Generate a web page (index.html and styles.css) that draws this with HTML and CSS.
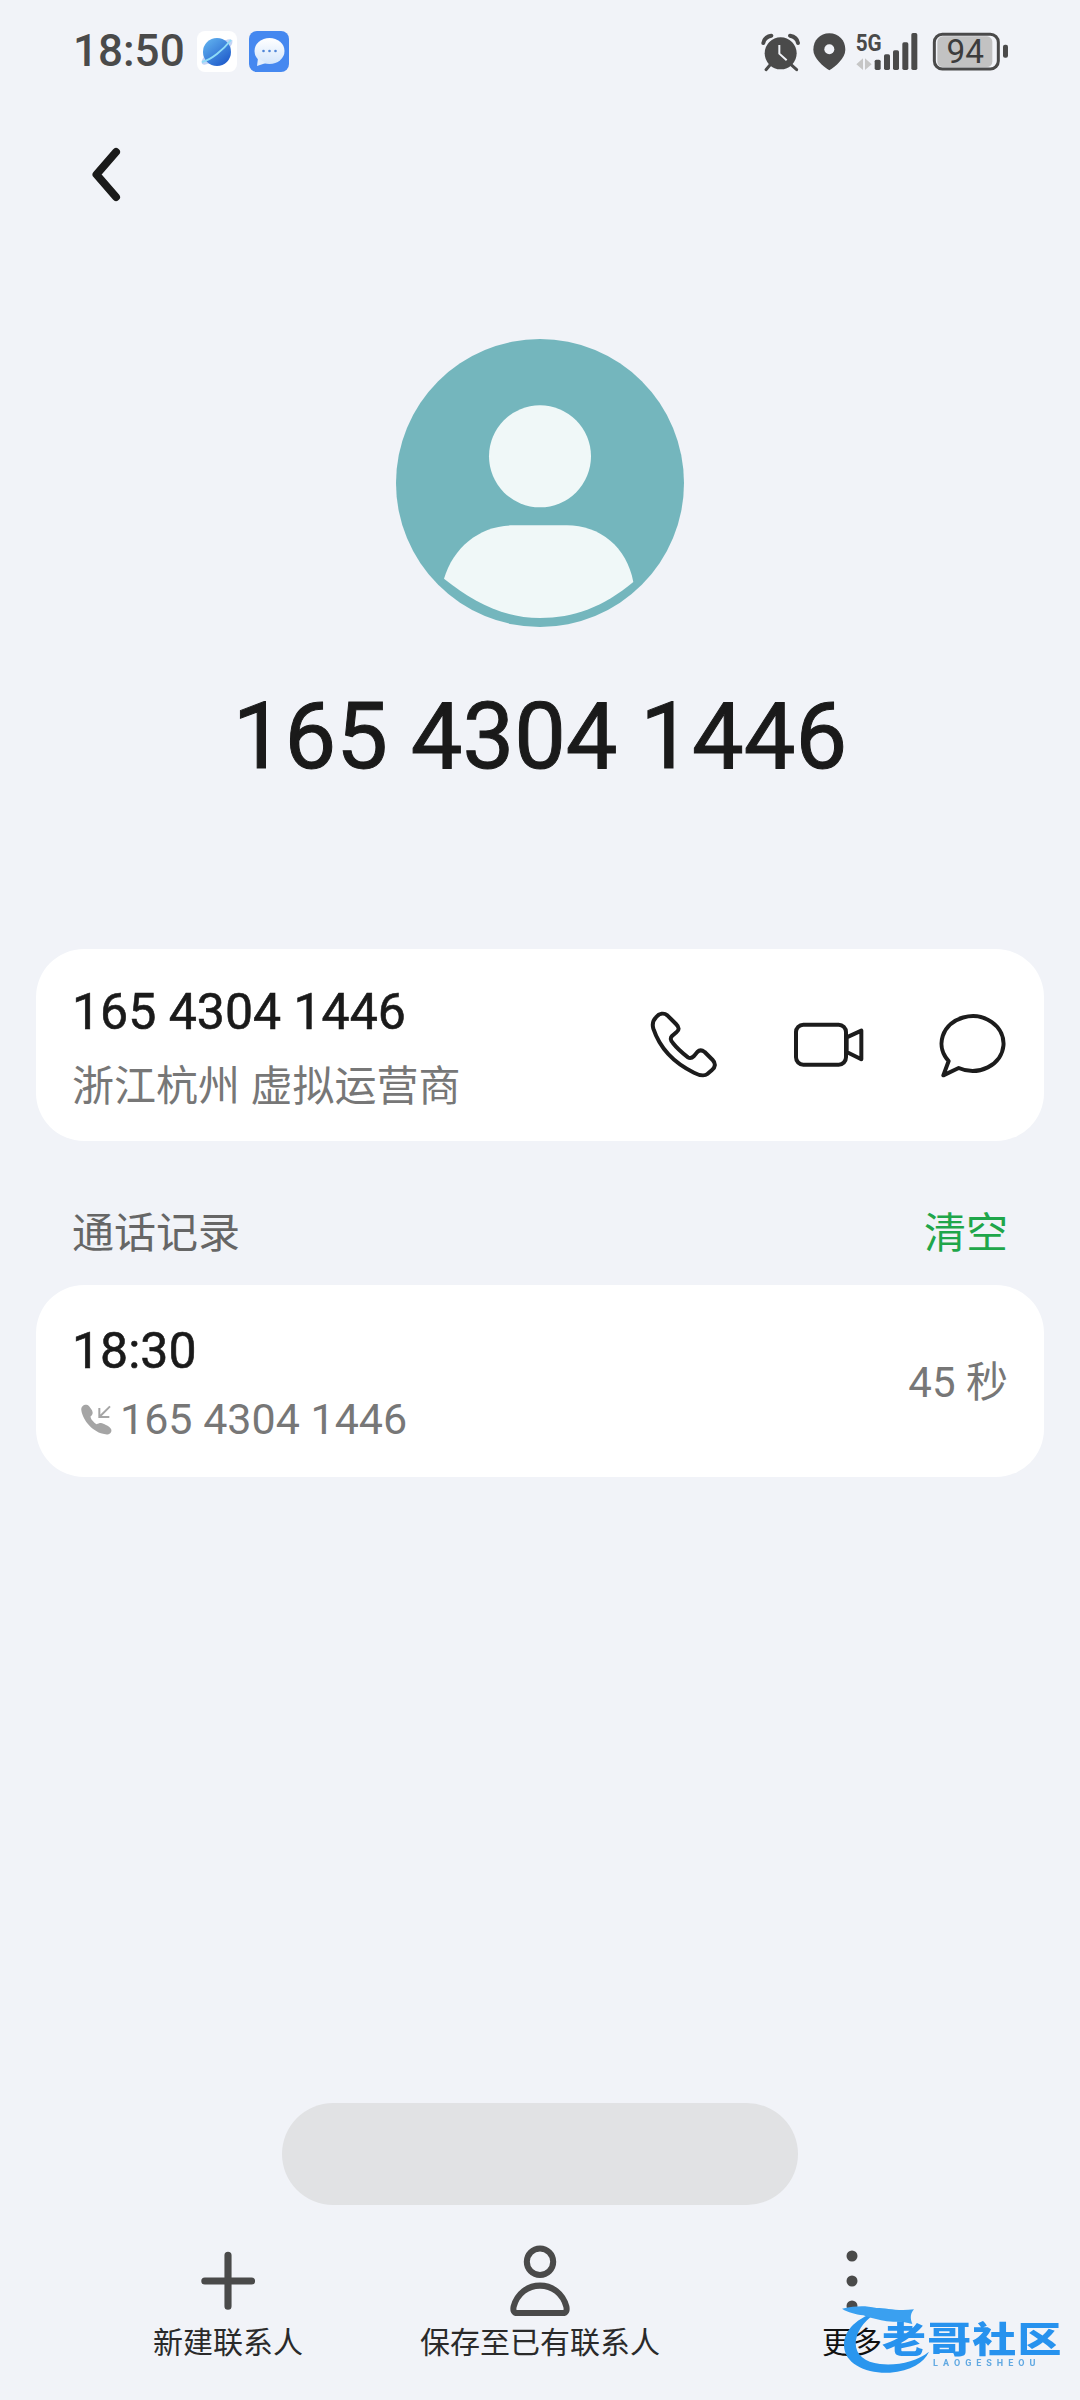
FILE: index.html
```html
<!DOCTYPE html>
<html lang="zh-CN">
<head>
<meta charset="utf-8">
<title>165 4304 1446</title>
<link rel="stylesheet" href="styles.css">
</head>
<body>
<main class="page">
  <header class="status">
    <div class="status-left">
      <span class="clock">18:50</span>
      <svg class="app-icon" viewBox="0 0 40 41">
        <defs>
          <linearGradient id="planet" x1="0.1" y1="0" x2="0.9" y2="1"><stop offset="0" stop-color="#63b4f0"/><stop offset="1" stop-color="#1a55c8"/></linearGradient>
          <linearGradient id="bubble" x1="0" y1="0" x2="0" y2="1"><stop offset="0" stop-color="#ffffff"/><stop offset="1" stop-color="#d4e6fb"/></linearGradient>
        </defs>
        <rect width="40" height="41" rx="8" fill="#fff"/>
        <ellipse cx="20" cy="21" rx="19" ry="6" transform="rotate(-38 20 21)" fill="#c3d4f6"/>
        <circle cx="20" cy="21" r="14" fill="url(#planet)"/>
        <path d="M5 31C14 29 26 19 34 9" fill="none" stroke="#8fdcf7" stroke-width="2"/>
      </svg>
      <svg class="app-icon" viewBox="0 0 40 41">
        <rect width="40" height="41" rx="8" fill="#4588f0"/>
        <ellipse cx="20.500" cy="20" rx="15" ry="13" fill="url(#bubble)"/>
        <path d="M9 27L8 35L17 32Z" fill="#e3effc"/>
        <circle cx="14.500" cy="20" r="1.300" fill="#4f86d8"/>
        <circle cx="20.500" cy="20" r="1.300" fill="#4f86d8"/>
        <circle cx="26.500" cy="20" r="1.300" fill="#4f86d8"/>
      </svg>
    </div>
    <div class="status-right">
      <svg class="st-alarm" viewBox="185 90 120 125">
        <circle cx="244" cy="157" r="48" fill="#4a4a4a"/>
        <path d="M192 126C194 114 204 106 216 104" fill="none" stroke="#4a4a4a" stroke-width="12" stroke-linecap="round"/>
        <path d="M296 126C294 114 284 106 272 104" fill="none" stroke="#4a4a4a" stroke-width="12" stroke-linecap="round"/>
        <path d="M212 192L200 206M276 192L292 206" stroke="#4a4a4a" stroke-width="9" stroke-linecap="round"/>
        <path d="M240 132V158L262 178" fill="none" stroke="#f1f3f8" stroke-width="6"/>
      </svg>
      <svg class="st-pin" viewBox="335 90 110 125">
        <path d="M390 97C362 97 342 118 342 146C342 172 372 196 390 208C408 196 438 172 438 146C438 118 418 97 390 97Z" fill="#4a4a4a"/>
        <circle cx="390" cy="145" r="15" fill="#f1f3f8"/>
      </svg>
      <svg class="st-signal" viewBox="465 60 195 155">
        <text class="fiveg" x="470" y="150" textLength="78" lengthAdjust="spacingAndGlyphs">5G</text>
        <path d="M492 172V207L472 190ZM498 172V207L518 190Z" fill="#c6c6c6"/>
        <rect x="527" y="176" width="18" height="31" rx="5" fill="#4a4a4a"/>
        <rect x="555" y="160" width="18" height="47" rx="5" fill="#4a4a4a"/>
        <rect x="582" y="148" width="18" height="59" rx="5" fill="#4a4a4a"/>
        <rect x="610" y="124" width="18" height="83" rx="5" fill="#4a4a4a"/>
        <rect x="637" y="96" width="18" height="111" rx="5" fill="#4a4a4a"/>
      </svg>
      <svg class="st-battery" viewBox="695 90 235 125">
        <rect x="714" y="106" width="165" height="92" rx="16" fill="#c2c2c2"/>
        <rect x="705" y="100" width="192" height="104" rx="24" fill="none" stroke="#4a4a4a" stroke-width="9"/>
        <rect x="911" y="131" width="15" height="39" rx="6" fill="#4a4a4a"/>
        <text class="batt" x="798" y="187" text-anchor="middle">94</text>
      </svg>
    </div>
  </header>

  <nav class="nav">
    <svg class="back" viewBox="0 0 60 60"><path d="M40 7L20.500 29.500L40 52" fill="none" stroke="#1a1a1a" stroke-width="8" stroke-linecap="round" stroke-linejoin="round"/></svg>
  </nav>

  <svg class="avatar" viewBox="78 56 864 864">
    <circle cx="510" cy="488" r="432" fill="#74b6bd"/>
    <circle cx="510" cy="408" r="153" fill="#f0f8f8"/>
    <path d="M222 775C250 680 330 615 430 615H590C690 615 770 680 790 785C700 860 610 893 510 893C400 893 310 845 222 775Z" fill="#f0f8f8"/>
  </svg>

  <h1 class="title">165 4304 1446</h1>

  <section class="card card-number">
    <div class="lines">
      <div class="primary">165 4304 1446</div>
      <div class="secondary">浙江杭州 虚拟运营商</div>
    </div>
    <div class="actions">
      <svg class="action" viewBox="84 84 216 216"><path d="M108 112C118 100 132 98 142 106L168 132C178 142 178 150 170 156L156 168C150 174 152 182 158 188C172 206 186 218 204 232C210 236 216 234 222 228L232 216C238 210 246 210 254 216L278 240C288 250 286 262 276 270L262 282C252 290 238 286 222 278C160 248 118 200 100 146C96 132 100 120 108 112Z" fill="none" stroke="#1c1c1c" stroke-width="12" stroke-linejoin="round"/></svg>
      <svg class="action" viewBox="516 84 216 216"><rect x="528" y="134" width="150" height="120" rx="22" fill="none" stroke="#1c1c1c" stroke-width="12"/><path d="M680 172L724 152V238L680 216Z" fill="none" stroke="#1c1c1c" stroke-width="12" stroke-linejoin="round"/></svg>
      <svg class="action" viewBox="950 84 216 216"><path d="M1018 264A93 82 0 1 0 988 243L972 286Z" fill="none" stroke="#1c1c1c" stroke-width="12" stroke-linejoin="round"/></svg>
    </div>
  </section>

  <div class="section-head">
    <span class="section-title">通话记录</span>
    <span class="clear">清空</span>
  </div>

  <section class="card card-log">
    <div class="lines">
      <div class="primary">18:30</div>
      <div class="secondary log-sub">
        <svg class="incoming" viewBox="120 300 96 96">
          <path d="M124 322C122 310 132 304 140 305C146 306 150 312 156 322C160 330 158 336 152 340C150 346 160 358 170 364C176 360 184 358 190 362C200 366 212 372 214 380C216 390 206 396 196 394C160 390 128 352 124 322Z" fill="#a5a5a5"/>
          <path d="M210 310L178 342M178 315V342H208" fill="none" stroke="#a5a5a5" stroke-width="6"/>
        </svg>
        <span class="log-number">165 4304 1446</span>
      </div>
    </div>
    <div class="duration">45 秒</div>
  </section>

  <div class="pill"></div>

  <footer class="toolbar">
    <div class="tool">
      <svg class="tool-icon" viewBox="201 79 202 202"><path d="M302 108V251M237 180H368" fill="none" stroke="#4a4a4a" stroke-width="20" stroke-linecap="round"/></svg>
      <span class="tool-label">新建联系人</span>
    </div>
    <div class="tool">
      <svg class="tool-icon" viewBox="1075 79 202 202">
        <circle cx="1176" cy="126" r="37" fill="none" stroke="#4a4a4a" stroke-width="17"/>
        <path d="M1112 270H1240C1250 270 1252 262 1250 252C1240 215 1210 193 1176 193C1142 193 1112 215 1102 252C1100 262 1102 270 1112 270Z" fill="none" stroke="#4a4a4a" stroke-width="17"/>
      </svg>
      <span class="tool-label">保存至已有联系人</span>
    </div>
    <div class="tool">
      <svg class="tool-icon" viewBox="0 0 72 72">
        <circle cx="36" cy="11" r="5.500" fill="#4a4a4a"/>
        <circle cx="36" cy="36" r="5.500" fill="#4a4a4a"/>
        <circle cx="36" cy="61" r="5.500" fill="#4a4a4a"/>
      </svg>
      <span class="tool-label more">更多</span>
    </div>
  </footer>

  <div class="watermark">
    <svg class="wm-dragon" viewBox="180 240 300 225">
      <path d="M300 272C230 292 192 330 192 375C192 432 260 462 330 458C392 453 432 428 447 395C410 425 350 438 300 432C250 426 222 400 228 360C234 325 258 296 300 272Z" fill="#2a96ee"/>
      <path d="M186 266C230 258 250 256 290 264C320 264 350 274 402 268C388 284 392 300 397 312C360 300 350 308 320 304C300 300 270 294 250 286C225 282 205 278 186 266Z" fill="#3aa0f0"/>
    </svg>
    <span class="wm-name">老哥社区</span>
    <span class="wm-sub">LAOGESHEOU</span>
  </div>
</main>
</body>
</html>
```

FILE: styles.css
```css
* { box-sizing: border-box; }
html, body { margin: 0; padding: 0; background: #f1f3f8; }
body { font-family: Roboto, "Noto Sans CJK SC", sans-serif; color: #1a1a1a; }

.page {
  position: relative;
  display: flex;
  flex-direction: column;
  width: 1080px;
  height: 2400px;
  overflow: hidden;
  background: #f1f3f8;
}

/* status bar */
.status {
  display: flex;
  justify-content: space-between;
  align-items: center;
  height: 41px;
  margin-top: 31px;
  padding: 0 71px 0 73px;
}
.status-left { display: flex; align-items: center; }
.clock { font-size: 44px; line-height: 41px; font-weight: 500; color: #4a4a4a; margin-right: 12px; }
.app-icon { width: 40px; height: 41px; margin-right: 12px; }
.status-right { display: flex; align-items: flex-end; height: 41.670px; }
.st-alarm { flex: none; width: 40px; height: 41.670px; margin-right: 10px; }
.st-pin { flex: none; width: 36.670px; height: 41.670px; margin-right: 6.670px; }
.st-signal { flex: none; width: 65px; height: 51.670px; margin-right: 11.670px; }
.st-battery { flex: none; width: 78.330px; height: 41.670px; }
.fiveg { font-family: Roboto, sans-serif; font-size: 72px; font-weight: 700; fill: #4a4a4a; }
.batt { font-family: Roboto, sans-serif; font-size: 100px; fill: #3c3c3c; }

/* nav */
.nav { display: flex; margin-top: 73px; padding-left: 76px; }
.back { width: 60px; height: 60px; }

/* header */
.avatar { align-self: center; width: 288px; height: 288px; margin-top: 134px; }
.title {
  margin: 60px 0 0;
  font-size: 92px;
  line-height: 100px;
  font-weight: 400;
  -webkit-text-stroke: 1px #1a1a1a;
  text-align: center;
  color: #1a1a1a;
}

/* cards */
.card {
  display: flex;
  justify-content: space-between;
  align-items: center;
  height: 192px;
  margin: 0 36px;
  padding: 0 36px;
  background: #fff;
  border-radius: 48px;
}
.card-number { margin-top: 162px; }
.card-number .lines { padding-top: 4px; }
.card-log { margin-top: 26px; }
.card-log .lines { gap: 13px; padding-top: 3px; }
.lines { display: flex; flex-direction: column; gap: 20px; }
.primary { font-size: 50px; line-height: 60px; font-weight: 400; -webkit-text-stroke: 0.6px #1a1a1a; color: #1a1a1a; }
.secondary { font-size: 42px; line-height: 50px; color: #777; }
.log-sub { display: flex; align-items: center; gap: 8px; padding-left: 8px; }
.log-number { font-size: 43px; }
.incoming { width: 32px; height: 32px; }
.actions { display: flex; gap: 72px; padding-bottom: 2px; }
.action { width: 72px; height: 72px; }
.duration { padding-top: 4px; font-size: 42px; line-height: 50px; color: #777; }

.section-head {
  display: flex;
  justify-content: space-between;
  margin-top: 68px;
  padding: 0 72px;
  font-size: 42px;
  line-height: 50px;
}
.section-title { color: #666; }
.clear { color: #1fa64a; }

/* bottom */
.pill {
  flex: none;
  align-self: center;
  width: 516px;
  height: 102px;
  margin-top: auto;
  background: #e1e2e4;
  border-radius: 51px;
}
.toolbar {
  display: grid;
  grid-template-columns: repeat(3, 312px);
  margin-top: 40px;
  padding: 0 72px 37px;
}
.tool { display: flex; flex-direction: column; align-items: center; gap: 6px; }
.tool-icon { width: 72px; height: 72px; }
.tool-label { font-size: 30px; line-height: 40px; color: #2a2a2a; white-space: nowrap; }
.more { color: #111; }

/* watermark over the toolbar */
.watermark { position: absolute; left: 840px; top: 2300px; width: 232px; height: 78px; filter: blur(0.6px); }
.wm-dragon { position: absolute; left: 0; top: 0; width: 100px; height: 75px; }
.wm-name {
  position: absolute;
  left: 42px;
  top: 11px;
  font-size: 36px;
  line-height: 60px;
  font-weight: 900;
  letter-spacing: 1px;
  white-space: nowrap;
  color: #2792ee;
  transform: scaleX(1.22);
  transform-origin: left center;
}
.wm-sub {
  position: absolute;
  left: 93px;
  top: 58px;
  font-size: 9px;
  line-height: 10px;
  font-weight: 700;
  letter-spacing: 5px;
  color: #62a9e2;
  white-space: nowrap;
}
```
